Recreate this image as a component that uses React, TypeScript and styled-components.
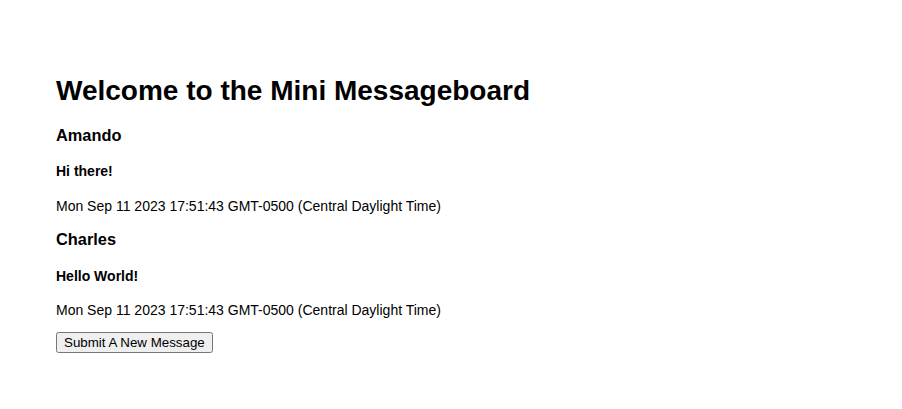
import React from "react";
import styled, { createGlobalStyle } from "styled-components";

const Global = createGlobalStyle`
  body { margin: 8px; font-family: "Liberation Sans", Arial, sans-serif; font-size: 14px; color: #000; background: #fff; }
`;

const Page = styled.main`
  padding: 48px;
`;

const Title = styled.h1`
  font-size: 2em;
  margin: 0.67em 0;
`;

const Author = styled.h3`
  font-size: 1.17em;
  margin: 1em 0;
`;

const Text = styled.h4`
  font-size: 1em;
  margin: 1.33em 0;
`;

const Stamp = styled.p`
  font-size: 1em;
  margin: 1em 0;
`;

const Button = styled.button`
  font-family: "Liberation Sans", Arial, sans-serif;
  font-size: 13.33px;
`;

const messages = [
  { user: "Amando", text: "Hi there!", added: "Mon Sep 11 2023 17:51:43 GMT-0500 (Central Daylight Time)" },
  { user: "Charles", text: "Hello World!", added: "Mon Sep 11 2023 17:51:43 GMT-0500 (Central Daylight Time)" },
];

export default function App() {
  return (
    <>
      <Global />
      <Page>
        <Title>Welcome to the Mini Messageboard</Title>
        {messages.map((m) => (
          <div key={m.user}>
            <Author>{m.user}</Author>
            <Text>{m.text}</Text>
            <Stamp>{m.added}</Stamp>
          </div>
        ))}
        <Button>Submit A New Message</Button>
      </Page>
    </>
  );
}
